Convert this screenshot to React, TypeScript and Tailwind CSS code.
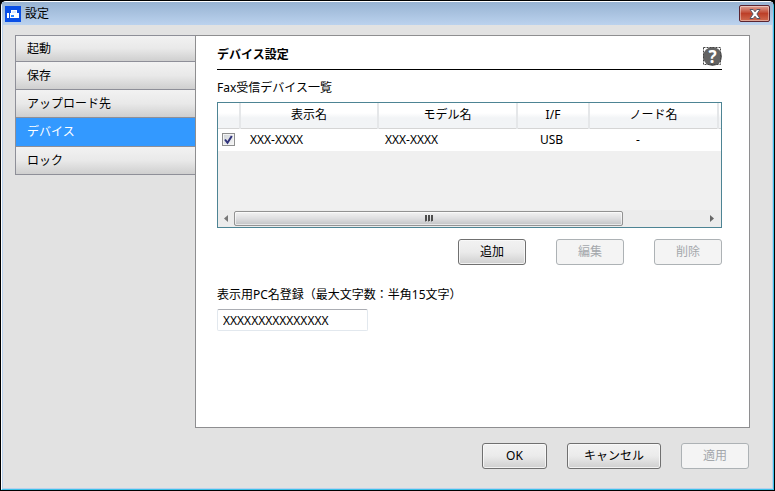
import { useState } from "react";
import clsx from "clsx";

const TABS = [
  { label: "起動", height: "h-[26px]" },
  { label: "保存", height: "h-7" },
  { label: "アップロード先", height: "h-7" },
  { label: "デバイス", height: "h-[29px]" },
  { label: "ロック", height: "h-[27px]" },
];

const COLUMNS = [
  { label: "", width: "w-[22px]" },
  { label: "表示名", width: "w-[138px]" },
  { label: "モデル名", width: "w-[139px]" },
  { label: "I/F", width: "w-[72px]" },
  { label: "ノード名", width: "w-[129px]" },
  { label: "", width: "" },
];

type ButtonProps = {
  label: string;
  width: string;
  disabled?: boolean;
};

const Button = ({ label, width, disabled = false }: ButtonProps) => {
  return (
    <button
      type="button"
      disabled={disabled}
      className={clsx(
        "h-[26px] rounded-[3px] border text-center leading-6",
        width,
        disabled
          ? "border-[#adb2b5] bg-[#f4f4f4] text-[#a4a8ac]"
          : "border-[#707070] bg-linear-to-b from-[#f2f2f2] from-0% via-[#ebebeb] via-50% to-[#cfcfcf] to-100% shadow-[inset_0_0_0_1px_#fafafacc]"
      )}
    >
      {label}
    </button>
  );
};

const FaxIcon = () => {
  return (
    <svg viewBox="0 0 16 16" className="h-4 w-4" aria-hidden="true">
      <rect width="16" height="16" fill="#0a4fe6" />
      <path d="M2 7h2v5H2zM6 4h6v3h2v5H5V7h1z" fill="#fff" />
      <path d="M7 5h4v2H7z" fill="#dbe8ff" />
      <path d="M6 9h3v2H6z" fill="#2b86ff" />
    </svg>
  );
};

const TitleBar = () => {
  return (
    <header className="flex h-[23px] items-center justify-between bg-linear-to-b from-[#98b3d2] to-[#bbd2ee] px-[3px]">
      <div className="flex items-center gap-1">
        <FaxIcon />
        <h1>設定</h1>
      </div>
      <button
        type="button"
        aria-label="閉じる"
        className="flex h-[17px] w-[31px] items-center justify-center rounded-[2px] border border-[#5a2430] bg-linear-to-b from-[#dda094] from-0% via-[#bd3f28] via-50% to-[#cf6a50] to-100% shadow-[inset_0_0_0_1px_#ffffff66]"
      >
        <svg viewBox="0 0 12 10" className="h-[10px] w-3" aria-hidden="true">
          <path
            d="M1 .5h3.200L6 2.800 7.800.5H11L7.900 5 11 9.500H7.800L6 7.200 4.200 9.500H1L4.100 5z"
            fill="#fff"
            stroke="#535666"
            strokeWidth="1"
          />
        </svg>
      </button>
    </header>
  );
};

type SideTabsProps = {
  active: string;
  onSelect: (label: string) => void;
};

const SideTabs = ({ active, onSelect }: SideTabsProps) => {
  return (
    <nav className="w-[180px] shrink-0 self-start border border-r-0 border-[#8e8f98]">
      {TABS.map((tab) => (
        <button
          key={tab.label}
          type="button"
          onClick={() => onSelect(tab.label)}
          className={clsx(
            "block w-full border-b border-[#8e8f98] pl-[11px] text-left last:border-b-0",
            tab.height,
            active === tab.label
              ? "bg-[#3399ff] text-white"
              : "bg-linear-to-b from-[#f2f2f2] from-0% via-[#e9e9e9] via-50% to-[#cfcfcf] to-100%"
          )}
        >
          {tab.label}
        </button>
      ))}
    </nav>
  );
};

const DeviceTable = () => {
  const [checked, setChecked] = useState(true);

  return (
    <div className="flex h-[126px] flex-col border border-[#4d8494] bg-[#f0f0f0]">
      <table className="w-full table-fixed border-collapse">
        <thead>
          <tr className="h-[25px] bg-linear-to-b from-white from-40% to-[#f2f4f6] to-60%">
            {COLUMNS.map((column, index) => (
              <th
                key={index}
                className={clsx(
                  "border-r-2 border-b border-r-[#e5e7e9] border-b-[#d5d5d5] p-0 font-normal last:border-r-0",
                  column.width
                )}
              >
                {column.label}
              </th>
            ))}
          </tr>
        </thead>
        <tbody>
          <tr className="h-[23px] bg-white">
            <td className="p-0">
              <label className="relative ml-1 block h-[13px] w-[13px]">
                <input
                  type="checkbox"
                  aria-label="XXX-XXXX"
                  checked={checked}
                  onChange={(e) => setChecked(e.target.checked)}
                  className="block h-[13px] w-[13px] appearance-none border border-[#8e8f8f] bg-linear-to-br from-[#cfd3d8] to-[#f6f6f6] shadow-[inset_0_0_0_1px_#f4f4f4]"
                />
                {checked && (
                  <svg
                    viewBox="0 0 13 13"
                    className="pointer-events-none absolute inset-0 h-[13px] w-[13px]"
                    aria-hidden="true"
                  >
                    <path d="M3 6.500 5.500 9.800 9.800 3" fill="none" stroke="#31347c" strokeWidth="2" />
                  </svg>
                )}
              </label>
            </td>
            <td className="p-0 pl-[10px]">XXX-XXXX</td>
            <td className="p-0 pl-[7px]">XXX-XXXX</td>
            <td className="p-0 pr-[3px] text-center">USB</td>
            <td className="p-0 pl-[47px]">-</td>
            <td className="p-0" />
          </tr>
        </tbody>
      </table>
      <div className="mt-auto flex h-[17px] items-center bg-[#ececec]">
        <button type="button" aria-label="左へ" className="flex w-4 shrink-0 justify-center">
          <svg viewBox="0 0 4 7" className="h-[7px] w-1" aria-hidden="true">
            <path d="M4 0v7L0 3.500z" fill="#777" />
          </svg>
        </button>
        <div className="flex-1">
          <div className="flex h-[15px] w-[83%] items-center justify-center rounded-[2px] border border-[#929292] bg-linear-to-b from-[#f3f3f3] from-0% via-[#dedee0] via-50% to-[#c2c3c5] to-100% shadow-[inset_0_0_0_1px_#ffffff99]">
            <svg viewBox="0 0 8 7" className="h-[7px] w-2" aria-hidden="true">
              <path d="M0 0h2v6H0zM3 0h2v6H3zM6 0h2v6H6z" fill="#4d4d4d" />
              <path d="M0 6h1v1H0zM3 6h1v1H3zM6 6h1v1H6z" fill="#999" />
            </svg>
          </div>
        </div>
        <button type="button" aria-label="右へ" className="flex w-[18px] shrink-0 justify-center">
          <svg viewBox="0 0 4 7" className="h-[7px] w-1" aria-hidden="true">
            <path d="M0 0v7L4 3.500z" fill="#666" />
          </svg>
        </button>
      </div>
    </div>
  );
};

const DevicePanel = () => {
  const [pcName, setPcName] = useState("XXXXXXXXXXXXXXX");

  return (
    <main className="flex-1 border border-[#8e8e90] bg-white pt-2 pr-[27px] pl-[21px]">
      <div className="flex h-[26px] items-center justify-between border-b border-black">
        <h2 className="pb-1 font-bold">デバイス設定</h2>
        <button
          type="button"
          aria-label="ヘルプ"
          className="relative h-[19px] w-[19px] rounded-full bg-[#636363] text-[17px] leading-[19px] font-bold text-white"
        >
          ?
          <svg viewBox="0 0 18 18" className="absolute top-0 left-0 h-[18px] w-[18px]" aria-hidden="true">
            <rect x=".5" y=".5" width="17" height="17" fill="none" stroke="#444" strokeDasharray="2 1" />
          </svg>
        </button>
      </div>
      <h3 className="mt-2 mb-1 h-5 leading-5">Fax受信デバイス一覧</h3>
      <DeviceTable />
      <div className="mt-[11px] flex justify-end gap-[30px]">
        <Button label="追加" width="w-[68px]" />
        <Button label="編集" width="w-[68px]" disabled />
        <Button label="削除" width="w-[68px]" disabled />
      </div>
      <label htmlFor="pc-name" className="mt-5 block h-5 leading-5">
        表示用PC名登録（最大文字数：半角15文字）
      </label>
      <input
        id="pc-name"
        type="text"
        maxLength={15}
        value={pcName}
        onChange={(e) => setPcName(e.target.value)}
        className="mt-1 block h-[22px] w-[151px] rounded-[2px] border border-[#e2e8ee] border-t-[#abadb3] px-[5px]"
      />
    </main>
  );
};

const App = () => {
  const [active, setActive] = useState("デバイス");

  return (
    <div className="flex min-h-screen flex-col bg-black p-px font-['Noto_Sans','Noto_Sans_CJK_JP',sans-serif] text-[12px] leading-4 text-black">
      <div className="flex flex-1 flex-col rounded-t-[5px] border border-t-white border-r-[#3cc0e8] border-b-[#3cc0e8] border-l-white bg-[#b9d1ed]">
        <TitleBar />
        <div className="mx-px mb-px flex flex-1 flex-col bg-[#e2e2e2] pt-[10px] pr-[22px] pl-3">
          <div className="flex flex-1">
            <SideTabs active={active} onSelect={setActive} />
            <DevicePanel />
          </div>
          <footer className="flex justify-end gap-5 pt-[15px] pr-px pb-[19px]">
            <Button label="OK" width="w-[65px]" />
            <Button label="キャンセル" width="w-[94px]" />
            <Button label="適用" width="w-[68px]" disabled />
          </footer>
        </div>
      </div>
    </div>
  );
};

export default App;
